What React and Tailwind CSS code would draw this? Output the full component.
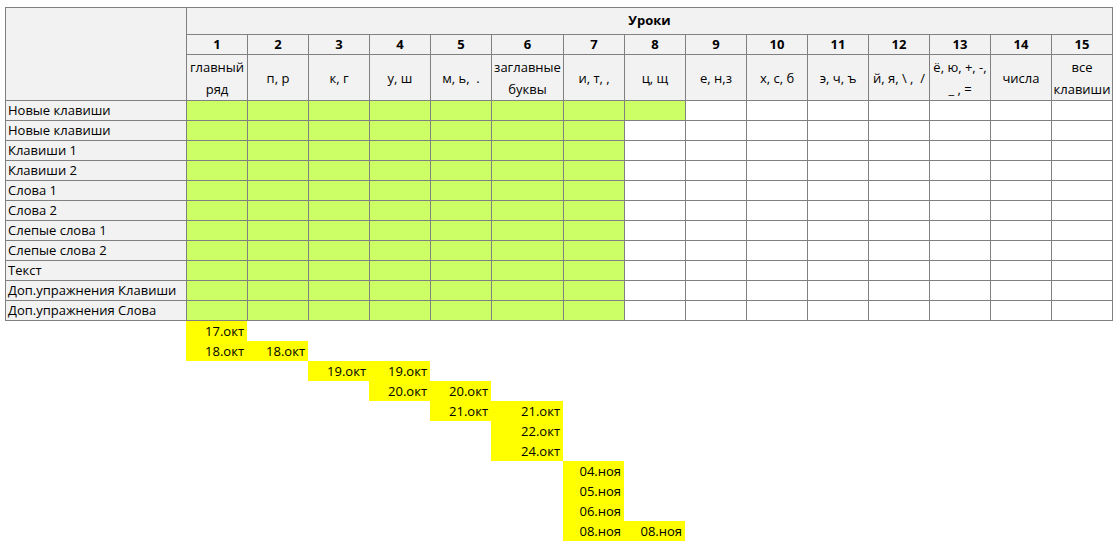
import React from "react";

const cols = [
  { n: 1, label: ["главный", "ряд"] },
  { n: 2, label: ["п, р"] },
  { n: 3, label: ["к, г"] },
  { n: 4, label: ["у, ш"] },
  { n: 5, label: ["м, ь,  ."] },
  { n: 6, label: ["заглавные", "буквы"] },
  { n: 7, label: ["и, т, ,"] },
  { n: 8, label: ["ц, щ"] },
  { n: 9, label: ["е, н,з"] },
  { n: 10, label: ["х, с, б"] },
  { n: 11, label: ["э, ч, ъ"] },
  { n: 12, label: ["й, я, \\ ,  /"] },
  { n: 13, label: ["ё, ю, +, -,", "_ , ="] },
  { n: 14, label: ["числа"] },
  { n: 15, label: ["все", "клавиши"] },
];

const rows = [
  { name: "Новые клавиши", done: 8 },
  { name: "Новые клавиши", done: 7 },
  { name: "Клавиши 1", done: 7 },
  { name: "Клавиши 2", done: 7 },
  { name: "Слова 1", done: 7 },
  { name: "Слова 2", done: 7 },
  { name: "Слепые слова 1", done: 7 },
  { name: "Слепые слова 2", done: 7 },
  { name: "Текст", done: 7 },
  { name: "Доп.упражнения Клавиши", done: 7 },
  { name: "Доп.упражнения Слова", done: 7 },
];

// date rows: column number -> text
const dates = [
  { 1: "17.окт" },
  { 1: "18.окт", 2: "18.окт" },
  { 3: "19.окт", 4: "19.окт" },
  { 4: "20.окт", 5: "20.окт" },
  { 5: "21.окт", 6: "21.окт" },
  { 6: "22.окт" },
  { 6: "24.окт" },
  { 7: "04.ноя" },
  { 7: "05.ноя" },
  { 7: "06.ноя" },
  { 7: "08.ноя", 8: "08.ноя" },
];

const gridCols = "grid grid-cols-[181px_repeat(5,61px)_72px_repeat(9,61px)]";
const cell = "border-r border-b border-[#808080]";

export default function App() {
  return (
    <div
      className="w-[1120px] h-[544px] bg-white pt-[7px] pl-[5px] text-[13px] text-black overflow-hidden"
      style={{ fontFamily: '"Open Sans", "Noto Sans", sans-serif' }}
    >
      <div className={`${gridCols} w-[1108px] border-l border-t border-[#808080]`}>
        {/* header */}
        <div className={`${cell} row-span-3 bg-[#f2f2f2]`} />
        <div className={`${cell} col-span-15 h-[27px] bg-[#f2f2f2] flex items-center justify-center font-bold`}>
          Уроки
        </div>
        {cols.map((c) => (
          <div
            key={"n" + c.n}
            className={`${cell} h-[20px] bg-[#f2f2f2] flex items-center justify-center font-bold leading-none`}
          >
            {c.n}
          </div>
        ))}
        {cols.map((c) => (
          <div
            key={"l" + c.n}
            className={`${cell} h-[46px] bg-[#f2f2f2] flex flex-col items-center justify-center leading-[22px] whitespace-pre`}
          >
            {c.label.map((t, i) => (
              <span key={i}>{t}</span>
            ))}
          </div>
        ))}

        {/* body */}
        {rows.map((r, ri) => (
          <React.Fragment key={ri}>
            <div className={`${cell} h-[20px] bg-[#f2f2f2] pl-[2px] flex items-center leading-none whitespace-nowrap`}>
              {r.name}
            </div>
            {cols.map((c) => (
              <div
                key={c.n}
                className={`${cell} h-[20px] ${c.n <= r.done ? "bg-[#ccff66]" : "bg-white"}`}
              />
            ))}
          </React.Fragment>
        ))}
      </div>

      {/* dates under the table */}
      <div className={`${gridCols} w-[1108px]`}>
        {dates.map((d, di) => (
          <React.Fragment key={di}>
            <div className="h-[20px]" />
            {cols.map((c) =>
              d[c.n] ? (
                <div
                  key={c.n}
                  className="h-[20px] bg-[#ffff00] flex items-center justify-end pr-[3px] leading-none"
                >
                  {d[c.n]}
                </div>
              ) : (
                <div key={c.n} className="h-[20px]" />
              )
            )}
          </React.Fragment>
        ))}
      </div>
    </div>
  );
}
